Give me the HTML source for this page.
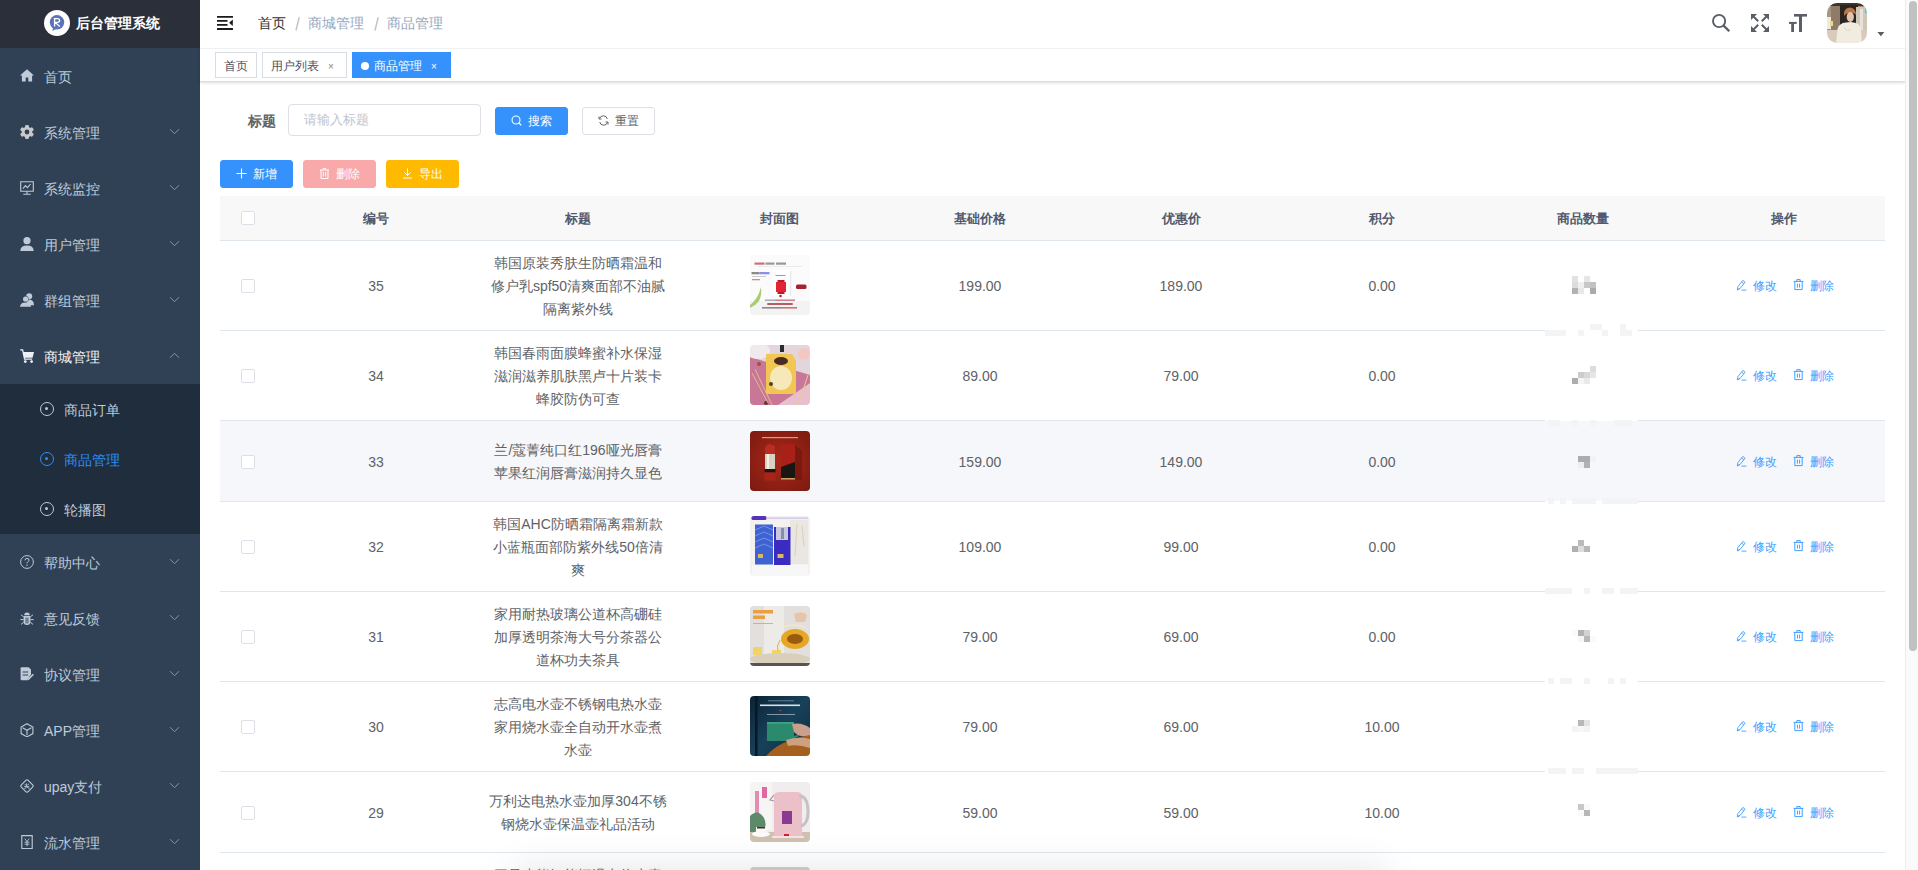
<!DOCTYPE html>
<html><head><meta charset="utf-8">
<style>
*{box-sizing:border-box;margin:0;padding:0}
html,body{width:1918px;height:870px;overflow:hidden;background:#fff;font-family:"Liberation Sans",sans-serif;}
.abs{position:absolute}
#side{position:absolute;left:0;top:0;width:200px;height:870px;background:#304156}
#logo{position:absolute;left:0;top:0;width:200px;height:48px;background:#2b2f3a}
#logo .c{position:absolute;left:44px;top:10px;width:26px;height:26px;border-radius:50%;background:#fff}
#logo .c i{position:absolute;left:6px;top:6px;width:14px;height:14px;border-radius:50%;background:#5a72b8}
#logo .t{position:absolute;left:76px;top:15px;font-size:14px;line-height:17px;font-weight:bold;color:#fff;white-space:nowrap}
.mi{position:absolute;left:0;width:200px;height:56px;color:#bfcbd9;font-size:14px}
.mi .tx{position:absolute;left:44px;top:20px;line-height:18px;white-space:nowrap}
.mi svg.ic{position:absolute;left:20px;top:21px}
.mi svg.ar{position:absolute;left:169px;top:24px}
#sub{position:absolute;left:0;top:384px;width:200px;height:150px;background:#1f2d3d}
.si{position:absolute;left:0;width:200px;height:50px;color:#bfcbd9;font-size:14px}
.si .tx{position:absolute;left:64px;top:17px;line-height:18px;white-space:nowrap}
.si .cir{position:absolute;left:40px;top:18px;width:14px;height:14px;border:1.3px solid #bfcbd9;border-radius:50%}
.si .cir:after{content:"";position:absolute;left:4.2px;top:4.2px;width:3px;height:3px;border-radius:50%;background:#bfcbd9}
.si.act{color:#2f8ef5}
.si.act .cir{border-color:#2f8ef5}
.si.act .cir:after{background:#2f8ef5}

#nav{position:absolute;left:200px;top:0;width:1705px;height:48px;background:#fff;z-index:2}
.bc{position:absolute;top:15px;font-size:14px;line-height:17px;white-space:nowrap}
#tags{position:absolute;left:200px;top:48px;width:1705px;height:34px;background:#fff;border-top:1px solid #eef0f1;border-bottom:1px solid #d8dce5;box-shadow:0 1px 3px 0 rgba(0,0,0,.12),0 0 3px 0 rgba(0,0,0,.04)}
.tag{position:absolute;top:3px;height:26px;border:1px solid #d8dce5;color:#495060;background:#fff;font-size:12px;line-height:24px;padding:1px 8px 0;white-space:nowrap}
.tag .x{display:inline-block;width:16px;text-align:center;font-size:10px;color:#888;margin-left:3px;position:relative;left:1px;top:0px}
.tag.act{background:#3592fd;border-color:#3592fd;color:#fff}
.tag.act .x{color:#fff}
.tag.act .dot{display:inline-block;width:8px;height:8px;border-radius:50%;background:#fff;margin-right:5px;vertical-align:0px}

#main{position:absolute;left:200px;top:82px;width:1705px;height:788px;background:#fff}
.btn{position:absolute;height:28px;font-size:12px;line-height:26px;border-radius:3px;border:1px solid;text-align:center;white-space:nowrap}

#scroll{position:absolute;left:1905px;top:0;width:13px;height:870px;background:#fafafa;border-left:1px solid #ececec}
#thumb{position:absolute;left:1909px;top:1px;width:8px;height:650px;border-radius:4px;background:#c1c1c1}

table{position:absolute;left:220px;top:196px;width:1665px;border-collapse:collapse;table-layout:fixed}
th{height:45px;background:#f8f8f9;color:#515a6e;font-size:13px;font-weight:bold;text-align:center;border-bottom:1px solid #dfe6ec}
td{color:#606266;font-size:14px;text-align:center;border-bottom:1px solid #dfe6ec;line-height:23px;padding:10px 0}
tr.hov td{background:#f5f7fa}
.cb{display:inline-block;width:14px;height:14px;border:1px solid #dcdfe6;border-radius:2px;background:#fff;vertical-align:middle}
.img{display:block;margin:0 auto;width:60px;height:60px;border-radius:4px;overflow:hidden;position:relative}
.tt{width:180px;margin:0 auto}
.op{font-size:12px;color:#409eff;white-space:nowrap}

.lbl{position:absolute;left:248px;top:112.5px;font-size:14px;line-height:16px;font-weight:bold;color:#606266;white-space:nowrap}
.inp{position:absolute;left:288px;top:104px;width:193px;height:32px;border:1px solid #dcdfe6;border-radius:4px;background:#fff}
.inp span{position:absolute;left:15px;top:7px;font-size:13px;line-height:16px;color:#c0c4cc;white-space:nowrap}
.btn{position:absolute;height:28px;font-size:12px;line-height:26px;border-radius:3px;border:1px solid;text-align:center;white-space:nowrap}
.btn svg{vertical-align:-1px;margin-right:6px}
#thead{position:absolute;left:220px;top:196px;width:1665px;height:45px;background:#f8f8f9;border-bottom:1px solid #dfe6ec}
#thead .h{position:absolute;top:15px;width:200px;text-align:center;font-size:13px;line-height:16px;font-weight:bold;color:#515a6e;white-space:nowrap}
.row{position:absolute;left:220px;width:1665px;border-bottom:1px solid #dfe6ec;background:#fff}
.row.hov{background:#f5f7fa}
.row .c{position:absolute;width:200px;display:flex;align-items:center;justify-content:center;text-align:center;font-size:14px;line-height:23px;color:#606266;white-space:nowrap}
.cb{position:absolute;display:block;width:14px;height:14px;border:1px solid #dcdfe6;border-radius:2px;background:#fff}
.im{position:absolute;width:60px;height:60px;border-radius:4px;overflow:hidden}
.im svg{filter:blur(0.5px)}
.px{position:absolute;display:block;width:6px;height:6px}
.lb{position:absolute;display:block;height:12px;background:#f3f4f6}
.op{position:absolute;font-size:12px;line-height:18px;color:#409eff;white-space:nowrap}
.op svg{vertical-align:-1px}
</style></head><body>

<div id="side">
  <div id="logo"><svg class="abs" style="left:43px;top:9px" width="28" height="28" viewBox="0 0 28 28"><circle cx="14" cy="14" r="13" fill="#fff"/><circle cx="14" cy="13.3" r="7.2" fill="#5b73b9"/><path d="M10 19L9.5 22L13 20Z" fill="#5b73b9"/><path d="M11.6 17.6V9.6H14.6Q16.6 9.6 16.6 11.6Q16.6 13.4 14.6 13.4H12.2L16.8 17.6" fill="none" stroke="#fff" stroke-width="1.3"/><path d="M10.8 9.6H13" stroke="#fff" stroke-width="1"/></svg><div class="t">后台管理系统</div></div>
  <div class="mi" style="top:48px"><svg class="ic" width="14" height="14" viewBox="0 0 14 14"><path d="M7 0.2L14 6.4H12.1V12.4H8.3V8.5H5.7V12.4H1.9V6.4H0Z" fill="#bfcbd9"/></svg><span class="tx">首页</span></div>
  <div class="mi" style="top:104px"><svg class="ic" width="14" height="14" viewBox="0 0 14 14"><circle cx="7" cy="7" r="5.3" fill="#c8c9cb"/><rect x="5.1" y="0" width="3.8" height="14" rx="1.2" fill="#c8c9cb" transform="rotate(0 7 7)"/><rect x="5.1" y="0" width="3.8" height="14" rx="1.2" fill="#c8c9cb" transform="rotate(60 7 7)"/><rect x="5.1" y="0" width="3.8" height="14" rx="1.2" fill="#c8c9cb" transform="rotate(120 7 7)"/><circle cx="7" cy="7" r="2.4" fill="#304156"/></svg><span class="tx">系统管理</span><svg class="ar" width="11" height="7" viewBox="0 0 11 7"><path d="M1 1.2L5.5 5.7L10 1.2" fill="none" stroke="#8b95a5" stroke-width="1"/></svg></div>
  <div class="mi" style="top:160px"><svg class="ic" width="14" height="14" viewBox="0 0 14 14"><path d="M0.7 0.7H13.3V10.2H0.7Z M7 10.2V13.2 M3.3 13.3H10.7" fill="none" stroke="#bfcbd9" stroke-width="1.1"/><path d="M3 7.6L5.4 4.6L7.4 6.6L10.6 3" fill="none" stroke="#bfcbd9" stroke-width="1.1"/></svg><span class="tx">系统监控</span><svg class="ar" width="11" height="7" viewBox="0 0 11 7"><path d="M1 1.2L5.5 5.7L10 1.2" fill="none" stroke="#8b95a5" stroke-width="1"/></svg></div>
  <div class="mi" style="top:216px"><svg class="ic" width="14" height="14" viewBox="0 0 14 14"><circle cx="7" cy="3.7" r="3.6" fill="#bfcbd9"/><path d="M0.3 14.3Q0.3 8.6 7 8.6Q13.7 8.6 13.7 14.3Z" fill="#bfcbd9"/></svg><span class="tx">用户管理</span><svg class="ar" width="11" height="7" viewBox="0 0 11 7"><path d="M1 1.2L5.5 5.7L10 1.2" fill="none" stroke="#8b95a5" stroke-width="1"/></svg></div>
  <div class="mi" style="top:272px"><svg class="ic" width="14" height="14" viewBox="0 0 14 14"><circle cx="9.2" cy="3.3" r="3" fill="#bfcbd9"/><path d="M6 8Q7 6.6 9.2 6.6Q13.8 6.8 14 12.3H8Z" fill="#bfcbd9"/><circle cx="5.6" cy="6" r="3" fill="#304156"/><circle cx="5.6" cy="6" r="2.6" fill="#bfcbd9"/><path d="M0 13.7Q0.2 9.4 5.6 9.4Q10.8 9.4 11 13.7Z" fill="#bfcbd9"/></svg><span class="tx">群组管理</span><svg class="ar" width="11" height="7" viewBox="0 0 11 7"><path d="M1 1.2L5.5 5.7L10 1.2" fill="none" stroke="#8b95a5" stroke-width="1"/></svg></div>
  <div class="mi" style="top:328px"><svg class="ic" width="14" height="14" viewBox="0 0 14 14"><path d="M0.2 0.9H2.6L4.6 10.2H12.2" fill="none" stroke="#edf1f5" stroke-width="1.3"/><path d="M3 2.9H14L12.6 8.8H4.2Z" fill="#edf1f5"/><circle cx="5.3" cy="12.6" r="1.4" fill="#edf1f5"/><circle cx="11.6" cy="12.6" r="1.4" fill="#edf1f5"/></svg><span class="tx" style="color:#f4f4f5">商城管理</span><svg class="ar" width="11" height="7" viewBox="0 0 11 7"><path d="M1 5.8L5.5 1.3L10 5.8" fill="none" stroke="#8b95a5" stroke-width="1"/></svg></div>
  <div id="sub">
    <div class="si" style="top:0"><i class="cir"></i><span class="tx">商品订单</span></div>
    <div class="si act" style="top:50px"><i class="cir"></i><span class="tx">商品管理</span></div>
    <div class="si" style="top:100px"><i class="cir"></i><span class="tx">轮播图</span></div>
  </div>
  <div class="mi" style="top:534px"><svg class="ic" width="14" height="14" viewBox="0 0 14 14"><circle cx="7" cy="7" r="6.4" fill="none" stroke="#bfcbd9" stroke-width="1"/><path d="M5 5.4Q5 3.4 7 3.4Q9 3.4 9 5.2Q9 6.4 7.6 7Q7 7.3 7 8.4" fill="none" stroke="#bfcbd9" stroke-width="1"/><circle cx="7" cy="10.3" r="0.7" fill="#bfcbd9"/></svg><span class="tx">帮助中心</span><svg class="ar" width="11" height="7" viewBox="0 0 11 7"><path d="M1 1.2L5.5 5.7L10 1.2" fill="none" stroke="#8b95a5" stroke-width="1"/></svg></div>
  <div class="mi" style="top:590px"><svg class="ic" width="14" height="14" viewBox="0 0 14 14"><path d="M4.2 4.2Q4.2 1.5 7 1.5Q9.8 1.5 9.8 4.2Z" fill="#bfcbd9"/><path d="M3.6 5H10.4V10.5Q10.4 14 7 14Q3.6 14 3.6 10.5Z" fill="#bfcbd9"/><path d="M6.1 6.5V12.5M7.9 6.5V12.5" stroke="#304156" stroke-width="0.9"/><path d="M1 3.8L3.6 5.8M13 3.8L10.4 5.8M0.3 8.6H3.6M13.7 8.6H10.4M1 13.4L3.8 11.2M13 13.4L10.2 11.2" stroke="#bfcbd9" stroke-width="1"/></svg><span class="tx">意见反馈</span><svg class="ar" width="11" height="7" viewBox="0 0 11 7"><path d="M1 1.2L5.5 5.7L10 1.2" fill="none" stroke="#8b95a5" stroke-width="1"/></svg></div>
  <div class="mi" style="top:646px"><svg class="ic" width="14" height="14" viewBox="0 0 14 14"><path d="M0.6 1.2Q0.6 0.2 1.6 0.2H8.6L11 2.6V7.5L7 13.2H1.6Q0.6 13.2 0.6 12.2Z" fill="#bfcbd9"/><path d="M2.6 5H8.2M2.6 8H8.2" stroke="#304156" stroke-width="1.1"/><path d="M8 12.6L13.4 7.2" stroke="#bfcbd9" stroke-width="1.6"/><path d="M7.2 13.6L7.8 11.8L8.8 12.8Z" fill="#bfcbd9"/></svg><span class="tx">协议管理</span><svg class="ar" width="11" height="7" viewBox="0 0 11 7"><path d="M1 1.2L5.5 5.7L10 1.2" fill="none" stroke="#8b95a5" stroke-width="1"/></svg></div>
  <div class="mi" style="top:702px"><svg class="ic" width="14" height="14" viewBox="0 0 14 14"><path d="M7 0.7L12.9 4V10.6L7 13.9L1.1 10.6V4Z" fill="none" stroke="#bfcbd9" stroke-width="1.1"/><path d="M2.6 4.8L7 7.3L11.4 4.8M7 7.3V12.3" fill="none" stroke="#bfcbd9" stroke-width="1.1"/></svg><span class="tx">APP管理</span><svg class="ar" width="11" height="7" viewBox="0 0 11 7"><path d="M1 1.2L5.5 5.7L10 1.2" fill="none" stroke="#8b95a5" stroke-width="1"/></svg></div>
  <div class="mi" style="top:758px"><svg class="ic" width="14" height="14" viewBox="0 0 14 14"><path d="M7 0.8Q7.6 0.8 8.2 1.4L12.6 5.8Q13.2 6.4 13.2 7Q13.2 7.6 12.6 8.2L8.2 12.6Q7.6 13.2 7 13.2Q6.4 13.2 5.8 12.6L1.4 8.2Q0.8 7.6 0.8 7Q0.8 6.4 1.4 5.8L5.8 1.4Q6.4 0.8 7 0.8Z" fill="none" stroke="#bfcbd9" stroke-width="1.1"/><path d="M4.2 7.4H9.4M6.6 4.4V7.4Q6.4 9.2 4.4 9.6M6.8 7.6Q7.6 9.2 9.6 9.4M5 5.2L5.8 6.4M8.6 4.8L7.8 6.2" fill="none" stroke="#bfcbd9" stroke-width="0.9"/></svg><span class="tx">upay支付</span><svg class="ar" width="11" height="7" viewBox="0 0 11 7"><path d="M1 1.2L5.5 5.7L10 1.2" fill="none" stroke="#8b95a5" stroke-width="1"/></svg></div>
  <div class="mi" style="top:814px"><svg class="ic" width="14" height="14" viewBox="0 0 14 14"><path d="M1.8 0.6H12.2V13.6H1.8Z" fill="none" stroke="#bfcbd9" stroke-width="1.1"/><path d="M4.8 3.6L7 6.6L9.2 3.6M7 6.6V11.2M4.6 7.2H9.4M4.6 9.2H9.4" fill="none" stroke="#bfcbd9" stroke-width="0.9"/></svg><span class="tx">流水管理</span><svg class="ar" width="11" height="7" viewBox="0 0 11 7"><path d="M1 1.2L5.5 5.7L10 1.2" fill="none" stroke="#8b95a5" stroke-width="1"/></svg></div>
</div>

<div id="nav">
  <svg class="abs" style="left:17px;top:16px" width="16" height="14" viewBox="0 0 16 14"><path d="M0.4 0.9H15.6M0.4 4.9H9.8M0.4 8.9H9.8M0.4 13H15.6" stroke="#1a1a1a" stroke-width="1.8" stroke-linecap="round"/><path d="M15.8 3.6V10.1L12.1 6.85Z" fill="#1a1a1a"/></svg>
  <span class="bc" style="left:58px;color:#303133">首页</span>
  <svg class="abs" style="left:94px;top:16px" width="7" height="16" viewBox="0 0 7 16"><path d="M5.2 1.2L2 14.5" stroke="#c0c4cc" stroke-width="1.5"/></svg>
  <span class="bc" style="left:108px;color:#97a8be">商城管理</span>
  <svg class="abs" style="left:173px;top:16px" width="7" height="16" viewBox="0 0 7 16"><path d="M5.2 1.2L2 14.5" stroke="#c0c4cc" stroke-width="1.5"/></svg>
  <span class="bc" style="left:187px;color:#97a8be">商品管理</span>

  <svg class="abs" style="left:1500px;top:0" width="205" height="48" viewBox="1700 0 205 48">
    <circle cx="1719.1" cy="21" r="6.1" fill="none" stroke="#5a5e66" stroke-width="1.9"/>
    <path d="M1723.6 25.6L1729.3 31.3" stroke="#5a5e66" stroke-width="2.3"/>
    <g fill="#5a5e66">
      <path d="M1751 14H1757L1751 20Z"/><path d="M1753.5 16.5L1758.2 21.2" stroke="#5a5e66" stroke-width="2"/>
      <path d="M1769 14H1763L1769 20Z"/><path d="M1766.5 16.5L1761.8 21.2" stroke="#5a5e66" stroke-width="2"/>
      <path d="M1751 32H1757L1751 26Z"/><path d="M1753.5 29.5L1758.2 24.8" stroke="#5a5e66" stroke-width="2"/>
      <path d="M1769 32H1763L1769 26Z"/><path d="M1766.5 29.5L1761.8 24.8" stroke="#5a5e66" stroke-width="2"/>
      <rect x="1794" y="14" width="13" height="2.6"/><rect x="1799" y="14" width="3" height="18"/>
      <rect x="1789" y="21.9" width="7.7" height="2"/><rect x="1791.2" y="22" width="2.8" height="10"/>
    </g>
    <path d="M1877.4 32H1884.4L1880.9 36.2Z" fill="#5a5e66"/>
  </svg>
  <div class="abs" style="left:1627px;top:3px;width:40px;height:40px;border-radius:10px;overflow:hidden">
    <svg width="40" height="40" viewBox="0 0 40 40" style="filter:blur(0.7px)">
      <rect x="-2" y="-2" width="44" height="44" fill="#a89682"/>
      <rect x="-2" y="-2" width="44" height="5" fill="#3e342c"/>
      <rect x="4" y="3" width="10" height="25" fill="#8e7c68"/>
      <rect x="-2" y="14" width="6" height="12" fill="#f0ead8"/>
      <rect x="3" y="18" width="3" height="5" fill="#e8d890"/>
      <rect x="13" y="2" width="18" height="23" fill="#2c2420"/>
      <rect x="29" y="4" width="13" height="30" fill="#cfc6b8"/>
      <rect x="33" y="6" width="3" height="26" fill="#e8e2d8"/>
      <rect x="-2" y="27" width="44" height="15" fill="#d9cbbb"/>
      <path d="M17 13Q16 5 23 4.5Q29 5 29 12Q27 9 23 10Q19 10 17 13Z" fill="#b8784a"/>
      <ellipse cx="23.3" cy="14" rx="3.6" ry="5" fill="#e2c4ae"/>
      <path d="M9 42L10.5 26Q12 20 19 19.5L24 19L29 20Q34 22 34 28L35 42Z" fill="#f1ece0"/>
      <path d="M17 24Q20 30 24 26" stroke="#e0d8c8" stroke-width="1" fill="none"/>
      <rect x="38" y="5" width="3" height="5" fill="#40d0d0"/>
    </svg>
  </div>
</div>

<div id="tags">
  <div class="tag" style="left:15px">首页</div>
  <div class="tag" style="left:62px;width:85px">用户列表<span class="x">×</span></div>
  <div class="tag act" style="left:152px;width:99px"><span class="dot"></span>商品管理<span class="x">×</span></div>
</div>


<div class="lbl">标题</div>
<div class="inp"><span>请输入标题</span></div>
<div class="btn" style="left:495px;top:107px;width:73px;background:#3592fd;border-color:#3592fd;color:#fff"><svg width="11" height="11" viewBox="0 0 11 11"><circle cx="5" cy="5" r="4" fill="none" stroke="#fff" stroke-width="1.1"/><path d="M8 8L10.3 10.3" stroke="#fff" stroke-width="1.1"/></svg>搜索</div>
<div class="btn" style="left:582px;top:107px;width:73px;background:#fff;border-color:#dcdfe6;color:#606266"><svg width="11" height="11" viewBox="0 0 11 11"><path d="M9.3 4A4 4 0 0 0 1.6 3.5 M1.7 7A4 4 0 0 0 9.4 7.5" fill="none" stroke="#606266" stroke-width="1"/><path d="M1 1.5V4H3.5 M10 9.5V7H7.5" fill="none" stroke="#606266" stroke-width="1"/></svg>重置</div>
<div class="btn" style="left:220px;top:160px;width:73px;background:#3592fd;border-color:#3592fd;color:#fff"><svg width="11" height="11" viewBox="0 0 11 11"><path d="M5.5 0.5V10.5M0.5 5.5H10.5" stroke="#fff" stroke-width="1.1"/></svg>新增</div>
<div class="btn" style="left:303px;top:160px;width:73px;background:#f9a9a9;border-color:#f9a9a9;color:#fff"><svg width="11" height="11" viewBox="0 0 11 11"><path d="M1 2H10 M4 2V0.7H7V2 M2 2V10.5H9V2 M4.3 4V8.5 M6.7 4V8.5" fill="none" stroke="#fff" stroke-width="1"/></svg>删除</div>
<div class="btn" style="left:386px;top:160px;width:73px;background:#ffba00;border-color:#ffba00;color:#fff"><svg width="11" height="11" viewBox="0 0 11 11"><path d="M5.5 0.5V7.5 M2.5 4.5L5.5 7.5L8.5 4.5 M1 10H10" fill="none" stroke="#fff" stroke-width="1"/></svg>导出</div>
<div id="thead">
  <i class="cb" style="left:21px;top:15px"></i>
  <div class="h" style="left:56px">编号</div>
  <div class="h" style="left:258px">标题</div>
  <div class="h" style="left:459px">封面图</div>
  <div class="h" style="left:660px">基础价格</div>
  <div class="h" style="left:861px">优惠价</div>
  <div class="h" style="left:1062px">积分</div>
  <div class="h" style="left:1263px">商品数量</div>
  <div class="h" style="left:1464px">操作</div>
</div>

<svg width="0" height="0" style="position:absolute">
 <defs>
  <linearGradient id="g6" x1="0" y1="0" x2="1" y2="1"><stop offset="0" stop-color="#0c2234"/><stop offset="0.5" stop-color="#17415a"/><stop offset="1" stop-color="#0e2a3c"/></linearGradient>
  <radialGradient id="g3" cx="0.5" cy="0.5" r="0.7"><stop offset="0" stop-color="#a8281a"/><stop offset="1" stop-color="#7c1a10"/></radialGradient>
 </defs>
</svg>
<!--ROWS-->
<div class="row" style="top:241px;height:90px">
<i class="cb" style="left:21px;top:38px"></i>
<div class="c" style="left:56px;top:0;height:89px;padding-top:2px">35</div>
<div class="c" style="left:258px;top:0;height:89px;padding-top:2px"><div class="tt">韩国原装秀肤生防晒霜温和<br>修户乳spf50清爽面部不油腻<br>隔离紫外线</div></div>
<div class="img1 im" style="left:530px;top:14px"><svg width="60" height="60" viewBox="0 0 60 60"><rect width="60" height="60" fill="#fbfbfb"/>
<rect x="0" y="46" width="60" height="14" fill="#f3f3f3"/>
<g opacity="0.75">
<rect x="4.5" y="7.5" width="10" height="2.2" fill="#c04050"/><rect x="15.5" y="7.5" width="9" height="2.2" fill="#777"/><rect x="26" y="7.5" width="10" height="2.2" fill="#777"/>
<rect x="8" y="11" width="44" height="0.7" fill="#ddd"/>
<rect x="1.5" y="17" width="8" height="2.3" fill="#666"/><rect x="9.5" y="17" width="10" height="2.3" fill="#6a6ae8"/>
<rect x="2" y="21" width="14" height="1" fill="#bbb"/><rect x="2" y="24" width="8" height="1.3" fill="#d06070"/>
<rect x="15" y="44.5" width="10" height="1.4" fill="#888"/><rect x="25" y="44.5" width="20" height="1.4" fill="#c04858"/>
<rect x="17" y="48" width="26" height="2" rx="1" fill="#a82838"/>
<rect x="12" y="52" width="20" height="1.6" fill="#666"/><rect x="32" y="52" width="15" height="1.6" fill="#c04858"/>
</g>
<rect x="23" y="15" width="18" height="26" fill="#fff"/><rect x="40" y="16" width="1.2" height="25" fill="#e8e8e8"/>
<rect x="25.5" y="20" width="10" height="1" fill="#d88090"/>
<path d="M26 27H36V37H26Z" fill="#e02535"/><rect x="27.5" y="25" width="7" height="2" fill="#c01a2a"/><rect x="27.5" y="37" width="7" height="2" fill="#c01a2a"/>
<circle cx="30.5" cy="41" r="1.3" fill="#c02030"/>
<rect x="46" y="29.5" width="10.5" height="4.5" rx="1.5" fill="#a82030"/>
<path d="M0 50Q8 44 11 32Q12 40 9 46Q6 50 0 53Z" fill="#a8cc70"/>
</svg></div>
<div class="c" style="left:660px;top:0;height:89px;padding-top:2px">199.00</div>
<div class="c" style="left:861px;top:0;height:89px;padding-top:2px">189.00</div>
<div class="c" style="left:1062px;top:0;height:89px;padding-top:2px">0.00</div>
<svg class="abs" style="left:1516px;top:38px" width="11" height="12" viewBox="0 0 11 12"><path d="M1.3 10.8L1.9 7.6L6.9 1.4L9.1 3.2L4.1 9.4Z M1.3 10.8L4.1 9.4 M5.6 3L7.8 4.8 M5.5 11.1H10.4" fill="none" stroke="#409eff" stroke-width="0.9"/></svg>
<span class="op" style="left:1533px;top:36px">修改</span>
<svg class="abs" style="left:1573px;top:38px" width="11" height="13" viewBox="0 0 11 13"><path d="M0.6 2.4H10.4 M3.8 2.4V0.6H7.2V2.4 M1.8 2.4V10.6H9.2V2.4 M4.4 4.6V8.6 M6.6 4.6V8.6" fill="none" stroke="#409eff" stroke-width="1"/></svg>
<span class="op" style="left:1590px;top:36px">删除</span>
</div>
<div class="row" style="top:331px;height:90px">
<i class="cb" style="left:21px;top:38px"></i>
<div class="c" style="left:56px;top:0;height:89px;padding-top:2px">34</div>
<div class="c" style="left:258px;top:0;height:89px;padding-top:2px"><div class="tt">韩国春雨面膜蜂蜜补水保湿<br>滋润滋养肌肤黑卢十片装卡<br>蜂胶防伪可查</div></div>
<div class="img2 im" style="left:530px;top:14px"><svg width="60" height="60" viewBox="0 0 60 60"><rect width="60" height="60" fill="#e2d6dc"/>
<path d="M0 12L60 30V60H0Z" fill="#c87896"/>
<path d="M28 60L60 38V60Z" fill="#e8c0cc"/>
<ellipse cx="8" cy="6" rx="12" ry="8" fill="#f0eaec"/>
<circle cx="54" cy="9" r="6" fill="#f4c8c0"/>
<rect x="30" y="0" width="4" height="7" fill="#2a2a30"/>
<path d="M16 9H42L46 16V49H16Z" fill="#f2c652"/>
<ellipse cx="31" cy="33" rx="11" ry="12" fill="#f6e8b8"/>
<ellipse cx="31" cy="16" rx="7" ry="4" fill="#4a2a22"/>
<circle cx="21" cy="39" r="2" fill="#4a4038"/>
<circle cx="16" cy="58" r="2" fill="#5a3a30"/><circle cx="9" cy="19" r="2" fill="#a05040"/>
<path d="M2 28L18 58M5 24L22 60" stroke="#e8c890" stroke-width="0.8"/>
<path d="M58 30L48 60" stroke="#e8c890" stroke-width="1"/></svg></div>
<div class="c" style="left:660px;top:0;height:89px;padding-top:2px">89.00</div>
<div class="c" style="left:861px;top:0;height:89px;padding-top:2px">79.00</div>
<div class="c" style="left:1062px;top:0;height:89px;padding-top:2px">0.00</div>
<svg class="abs" style="left:1516px;top:38px" width="11" height="12" viewBox="0 0 11 12"><path d="M1.3 10.8L1.9 7.6L6.9 1.4L9.1 3.2L4.1 9.4Z M1.3 10.8L4.1 9.4 M5.6 3L7.8 4.8 M5.5 11.1H10.4" fill="none" stroke="#409eff" stroke-width="0.9"/></svg>
<span class="op" style="left:1533px;top:36px">修改</span>
<svg class="abs" style="left:1573px;top:38px" width="11" height="13" viewBox="0 0 11 13"><path d="M0.6 2.4H10.4 M3.8 2.4V0.6H7.2V2.4 M1.8 2.4V10.6H9.2V2.4 M4.4 4.6V8.6 M6.6 4.6V8.6" fill="none" stroke="#409eff" stroke-width="1"/></svg>
<span class="op" style="left:1590px;top:36px">删除</span>
</div>
<div class="row hov" style="top:421px;height:81px">
<i class="cb" style="left:21px;top:34px"></i>
<div class="c" style="left:56px;top:0;height:80px;padding-top:2px">33</div>
<div class="c" style="left:258px;top:0;height:80px;padding-top:2px"><div class="tt">兰/蔻菁纯口红196哑光唇膏<br>苹果红润唇膏滋润持久显色</div></div>
<div class="img3 im" style="left:530px;top:10px"><svg width="60" height="60" viewBox="0 0 60 60"><rect width="60" height="60" fill="url(#g3)"/>
<rect x="12" y="6" width="36" height="1.2" fill="#d89a8a"/>
<path d="M15 17Q16 13 20 13L25 15V24H15Z" fill="#b82c22"/>
<rect x="15" y="23" width="10" height="15" fill="#d8d0c0"/><rect x="17" y="23" width="2" height="15" fill="#f4f0e8"/>
<rect x="14.5" y="38" width="11" height="3.5" fill="#1e1410"/>
<rect x="14.5" y="41.5" width="11" height="8" fill="#a82418"/>
<rect x="31" y="13" width="14" height="36" rx="1" fill="#a82018"/>
<path d="M31 36L45 31V47H31Z" fill="#1a1614"/>
<rect x="31" y="47" width="14" height="1.5" fill="#c8a060"/>
<path d="M45 14L52 20V49L45 49Z" fill="#6a140c" opacity="0.6"/></svg></div>
<div class="c" style="left:660px;top:0;height:80px;padding-top:2px">159.00</div>
<div class="c" style="left:861px;top:0;height:80px;padding-top:2px">149.00</div>
<div class="c" style="left:1062px;top:0;height:80px;padding-top:2px">0.00</div>
<svg class="abs" style="left:1516px;top:34px" width="11" height="12" viewBox="0 0 11 12"><path d="M1.3 10.8L1.9 7.6L6.9 1.4L9.1 3.2L4.1 9.4Z M1.3 10.8L4.1 9.4 M5.6 3L7.8 4.8 M5.5 11.1H10.4" fill="none" stroke="#409eff" stroke-width="0.9"/></svg>
<span class="op" style="left:1533px;top:32px">修改</span>
<svg class="abs" style="left:1573px;top:34px" width="11" height="13" viewBox="0 0 11 13"><path d="M0.6 2.4H10.4 M3.8 2.4V0.6H7.2V2.4 M1.8 2.4V10.6H9.2V2.4 M4.4 4.6V8.6 M6.6 4.6V8.6" fill="none" stroke="#409eff" stroke-width="1"/></svg>
<span class="op" style="left:1590px;top:32px">删除</span>
</div>
<div class="row" style="top:502px;height:90px">
<i class="cb" style="left:21px;top:38px"></i>
<div class="c" style="left:56px;top:0;height:89px;padding-top:2px">32</div>
<div class="c" style="left:258px;top:0;height:89px;padding-top:2px"><div class="tt">韩国AHC防晒霜隔离霜新款<br>小蓝瓶面部防紫外线50倍清<br>爽</div></div>
<div class="img4 im" style="left:530px;top:14px"><svg width="60" height="60" viewBox="0 0 60 60"><rect width="60" height="60" fill="#f4f2f0"/>
<rect x="40" y="4" width="18" height="44" fill="#eae6e2"/>
<path d="M47 8L45 40M52 10L54 30" stroke="#d8c8b0" stroke-width="0.8"/>
<rect x="1.5" y="0" width="15" height="4" rx="1.5" fill="#5534b8"/>
<rect x="16" y="1.5" width="42" height="1.2" fill="#c8c0e8"/>
<rect x="5" y="8.5" width="18" height="40" fill="#3f62d2"/>
<path d="M5 14L14 10L23 14M5 20L14 16L23 20M5 26L14 22L23 26M5 32L14 28L23 32" stroke="#8aa8f0" stroke-width="0.7" fill="none"/>
<rect x="8" y="38" width="5" height="4" fill="#d8b860"/>
<rect x="24" y="11" width="16.5" height="43.5" fill="#3a2cc0"/>
<rect x="26" y="11" width="12" height="13" fill="#c8c8dc"/><rect x="31" y="12" width="3" height="11" fill="#8a8ab0"/>
<rect x="27.5" y="38" width="6" height="4" fill="#d8b860"/>
<rect x="2" y="49" width="56" height="11" fill="#f7f7f7"/></svg></div>
<div class="c" style="left:660px;top:0;height:89px;padding-top:2px">109.00</div>
<div class="c" style="left:861px;top:0;height:89px;padding-top:2px">99.00</div>
<div class="c" style="left:1062px;top:0;height:89px;padding-top:2px">0.00</div>
<svg class="abs" style="left:1516px;top:38px" width="11" height="12" viewBox="0 0 11 12"><path d="M1.3 10.8L1.9 7.6L6.9 1.4L9.1 3.2L4.1 9.4Z M1.3 10.8L4.1 9.4 M5.6 3L7.8 4.8 M5.5 11.1H10.4" fill="none" stroke="#409eff" stroke-width="0.9"/></svg>
<span class="op" style="left:1533px;top:36px">修改</span>
<svg class="abs" style="left:1573px;top:38px" width="11" height="13" viewBox="0 0 11 13"><path d="M0.6 2.4H10.4 M3.8 2.4V0.6H7.2V2.4 M1.8 2.4V10.6H9.2V2.4 M4.4 4.6V8.6 M6.6 4.6V8.6" fill="none" stroke="#409eff" stroke-width="1"/></svg>
<span class="op" style="left:1590px;top:36px">删除</span>
</div>
<div class="row" style="top:592px;height:90px">
<i class="cb" style="left:21px;top:38px"></i>
<div class="c" style="left:56px;top:0;height:89px;padding-top:2px">31</div>
<div class="c" style="left:258px;top:0;height:89px;padding-top:2px"><div class="tt">家用耐热玻璃公道杯高硼硅<br>加厚透明茶海大号分茶器公<br>道杯功夫茶具</div></div>
<div class="img5 im" style="left:530px;top:14px"><svg width="60" height="60" viewBox="0 0 60 60"><rect width="60" height="60" fill="#e2dfdc"/>
<rect x="14" y="0" width="20" height="50" fill="#ecebe8"/>
<rect x="3" y="4" width="20" height="3.5" fill="#e8a040"/>
<rect x="3" y="9.5" width="12" height="3.5" fill="#e8a040"/>
<rect x="3" y="17" width="20" height="0.8" fill="#aaa"/>
<path d="M44 8Q52 4 57 9L55 16L46 16Z" fill="#e8c4a8"/>
<ellipse cx="45" cy="33" rx="14" ry="10" fill="#e6a824"/>
<ellipse cx="45" cy="33" rx="8" ry="5" fill="#9a5a10"/>
<path d="M31 22Q44 16 56 22" stroke="#f4e8c8" stroke-width="1.5" fill="none"/>
<path d="M30 34Q26 40 28 46" stroke="#e0b040" stroke-width="1" fill="none"/>
<rect x="3" y="41" width="9" height="8" fill="#f0d25a" opacity="0.9"/>
<rect x="22" y="44" width="9" height="7" fill="#f0d25a" opacity="0.9"/>
<ellipse cx="30" cy="53" rx="30" ry="6" fill="#d8d0bc"/>
<rect x="0" y="57" width="60" height="3" fill="#585450"/></svg></div>
<div class="c" style="left:660px;top:0;height:89px;padding-top:2px">79.00</div>
<div class="c" style="left:861px;top:0;height:89px;padding-top:2px">69.00</div>
<div class="c" style="left:1062px;top:0;height:89px;padding-top:2px">0.00</div>
<svg class="abs" style="left:1516px;top:38px" width="11" height="12" viewBox="0 0 11 12"><path d="M1.3 10.8L1.9 7.6L6.9 1.4L9.1 3.2L4.1 9.4Z M1.3 10.8L4.1 9.4 M5.6 3L7.8 4.8 M5.5 11.1H10.4" fill="none" stroke="#409eff" stroke-width="0.9"/></svg>
<span class="op" style="left:1533px;top:36px">修改</span>
<svg class="abs" style="left:1573px;top:38px" width="11" height="13" viewBox="0 0 11 13"><path d="M0.6 2.4H10.4 M3.8 2.4V0.6H7.2V2.4 M1.8 2.4V10.6H9.2V2.4 M4.4 4.6V8.6 M6.6 4.6V8.6" fill="none" stroke="#409eff" stroke-width="1"/></svg>
<span class="op" style="left:1590px;top:36px">删除</span>
</div>
<div class="row" style="top:682px;height:90px">
<i class="cb" style="left:21px;top:38px"></i>
<div class="c" style="left:56px;top:0;height:89px;padding-top:2px">30</div>
<div class="c" style="left:258px;top:0;height:89px;padding-top:2px"><div class="tt">志高电水壶不锈钢电热水壶<br>家用烧水壶全自动开水壶煮<br>水壶</div></div>
<div class="img6 im" style="left:530px;top:14px"><svg width="60" height="60" viewBox="0 0 60 60"><rect width="60" height="60" fill="url(#g6)"/>
<rect x="5" y="0" width="2.5" height="60" fill="#071826"/>
<rect x="18" y="4.5" width="26" height="0.7" fill="#8aa0b0"/>
<rect x="10" y="8.5" width="40" height="1.6" fill="#d8e2ea"/>
<rect x="29" y="14" width="3" height="0.8" fill="#c04040"/>
<rect x="17" y="18" width="28" height="0.8" fill="#9ab0c0"/>
<path d="M17 26H44V45H17Z" fill="#2b8a6c"/><rect x="17" y="26" width="27" height="2" fill="#3aa080"/>
<path d="M44 30Q50 30 49 37Q48 41 44 41" stroke="#2b8a6c" stroke-width="2" fill="none"/>
<path d="M42 28Q52 26 60 32V40Q50 42 44 36Z" fill="#caa08c"/>
<path d="M16 60Q30 44 60 39V60Z" fill="#a4601e"/>
<path d="M36 44Q48 40 60 43V52Q48 48 38 50Z" fill="#d8b098" opacity="0.8"/></svg></div>
<div class="c" style="left:660px;top:0;height:89px;padding-top:2px">79.00</div>
<div class="c" style="left:861px;top:0;height:89px;padding-top:2px">69.00</div>
<div class="c" style="left:1062px;top:0;height:89px;padding-top:2px">10.00</div>
<svg class="abs" style="left:1516px;top:38px" width="11" height="12" viewBox="0 0 11 12"><path d="M1.3 10.8L1.9 7.6L6.9 1.4L9.1 3.2L4.1 9.4Z M1.3 10.8L4.1 9.4 M5.6 3L7.8 4.8 M5.5 11.1H10.4" fill="none" stroke="#409eff" stroke-width="0.9"/></svg>
<span class="op" style="left:1533px;top:36px">修改</span>
<svg class="abs" style="left:1573px;top:38px" width="11" height="13" viewBox="0 0 11 13"><path d="M0.6 2.4H10.4 M3.8 2.4V0.6H7.2V2.4 M1.8 2.4V10.6H9.2V2.4 M4.4 4.6V8.6 M6.6 4.6V8.6" fill="none" stroke="#409eff" stroke-width="1"/></svg>
<span class="op" style="left:1590px;top:36px">删除</span>
</div>
<div class="row" style="top:772px;height:81px">
<i class="cb" style="left:21px;top:34px"></i>
<div class="c" style="left:56px;top:0;height:80px;padding-top:2px">29</div>
<div class="c" style="left:258px;top:0;height:80px;padding-top:2px"><div class="tt">万利达电热水壶加厚304不锈<br>钢烧水壶保温壶礼品活动</div></div>
<div class="img7 im" style="left:530px;top:10px"><svg width="60" height="60" viewBox="0 0 60 60"><rect width="60" height="60" fill="#efeded"/>
<rect x="0" y="0" width="22" height="48" fill="#f7f4f4"/>
<rect x="12" y="5" width="5" height="11" fill="#e06aa0"/>
<rect x="5" y="9" width="4" height="33" fill="#e07aa8" opacity="0.85"/>
<path d="M0 34Q8 26 14 36Q18 44 12 52L0 52Z" fill="#5d8a6a"/>
<rect x="0" y="50" width="60" height="10" fill="#cfc0b0"/>
<ellipse cx="11" cy="52" rx="9" ry="3" fill="#fafafa"/><rect x="6" y="45" width="10" height="6" fill="#f8f8f8"/><rect x="7" y="45" width="8" height="1.5" fill="#4a3020"/>
<path d="M24 14Q24 10 30 10H47Q52 10 52 15V54H24Z" fill="#ecc0c8"/>
<path d="M49 14Q58 14 58 30Q58 42 51 44" stroke="#c8c0c4" stroke-width="3" fill="none"/>
<path d="M24 13L20 18L24 19" stroke="#999" stroke-width="1.2" fill="none"/>
<rect x="32" y="29" width="10" height="13" fill="#8a3a92"/>
<rect x="34" y="52" width="5" height="2" fill="#d02030"/>
<rect x="22" y="54" width="32" height="2" fill="#f4e4e8"/></svg></div>
<div class="c" style="left:660px;top:0;height:80px;padding-top:2px">59.00</div>
<div class="c" style="left:861px;top:0;height:80px;padding-top:2px">59.00</div>
<div class="c" style="left:1062px;top:0;height:80px;padding-top:2px">10.00</div>
<svg class="abs" style="left:1516px;top:34px" width="11" height="12" viewBox="0 0 11 12"><path d="M1.3 10.8L1.9 7.6L6.9 1.4L9.1 3.2L4.1 9.4Z M1.3 10.8L4.1 9.4 M5.6 3L7.8 4.8 M5.5 11.1H10.4" fill="none" stroke="#409eff" stroke-width="0.9"/></svg>
<span class="op" style="left:1533px;top:32px">修改</span>
<svg class="abs" style="left:1573px;top:34px" width="11" height="13" viewBox="0 0 11 13"><path d="M0.6 2.4H10.4 M3.8 2.4V0.6H7.2V2.4 M1.8 2.4V10.6H9.2V2.4 M4.4 4.6V8.6 M6.6 4.6V8.6" fill="none" stroke="#409eff" stroke-width="1"/></svg>
<span class="op" style="left:1590px;top:32px">删除</span>
</div>
<div class="row" style="top:853px;height:90px">
<i class="cb" style="left:21px;top:38px"></i>
<div class="c" style="left:56px;top:0;height:89px;padding-top:2px">28</div>
<div class="c" style="left:258px;top:0;height:89px;padding-top:2px"><div class="tt">三只小熊智能恒温电热水壶<br>家用烧水壶保温壶智能水壶<br>礼品</div></div>
<div class="img8 im" style="left:530px;top:14px"><svg width="60" height="60" viewBox="0 0 60 60"><rect width="60" height="60" fill="#d0d0d0"/></svg></div>
<div class="c" style="left:660px;top:0;height:89px;padding-top:2px">59.00</div>
<div class="c" style="left:861px;top:0;height:89px;padding-top:2px">59.00</div>
<div class="c" style="left:1062px;top:0;height:89px;padding-top:2px">10.00</div>
<svg class="abs" style="left:1516px;top:38px" width="11" height="12" viewBox="0 0 11 12"><path d="M1.3 10.8L1.9 7.6L6.9 1.4L9.1 3.2L4.1 9.4Z M1.3 10.8L4.1 9.4 M5.6 3L7.8 4.8 M5.5 11.1H10.4" fill="none" stroke="#409eff" stroke-width="0.9"/></svg>
<span class="op" style="left:1533px;top:36px">修改</span>
<svg class="abs" style="left:1573px;top:38px" width="11" height="13" viewBox="0 0 11 13"><path d="M0.6 2.4H10.4 M3.8 2.4V0.6H7.2V2.4 M1.8 2.4V10.6H9.2V2.4 M4.4 4.6V8.6 M6.6 4.6V8.6" fill="none" stroke="#409eff" stroke-width="1"/></svg>
<span class="op" style="left:1590px;top:36px">删除</span>
</div>
<i class="px" style="left:1572px;top:276px;background:#e2e2e2"></i>
<i class="px" style="left:1584px;top:276px;background:#e6e6e6"></i>
<i class="px" style="left:1572px;top:282px;background:#dcdcdc"></i>
<i class="px" style="left:1578px;top:282px;background:#eeeeee"></i>
<i class="px" style="left:1584px;top:282px;background:#c8c8c8"></i>
<i class="px" style="left:1590px;top:282px;background:#c2c2c2"></i>
<i class="px" style="left:1572px;top:288px;background:#b2b2b2"></i>
<i class="px" style="left:1578px;top:288px;background:#e8e8e8"></i>
<i class="px" style="left:1590px;top:288px;background:#ababab"></i>
<i class="px" style="left:1590px;top:366px;background:#dcdcdc"></i>
<i class="px" style="left:1578px;top:372px;background:#cccccc"></i>
<i class="px" style="left:1584px;top:372px;background:#d8d8d8"></i>
<i class="px" style="left:1590px;top:372px;background:#e6e6e6"></i>
<i class="px" style="left:1572px;top:378px;background:#adadad"></i>
<i class="px" style="left:1578px;top:378px;background:#f4f4f4"></i>
<i class="px" style="left:1584px;top:378px;background:#eaeaea"></i>
<i class="px" style="left:1578px;top:456px;background:#acacac"></i>
<i class="px" style="left:1584px;top:456px;background:#acacac"></i>
<i class="px" style="left:1590px;top:456px;background:#f2f2f4"></i>
<i class="px" style="left:1578px;top:462px;background:#eeeeee"></i>
<i class="px" style="left:1584px;top:462px;background:#b2b2b2"></i>
<i class="px" style="left:1578px;top:540px;background:#bbbbbb"></i>
<i class="px" style="left:1572px;top:546px;background:#b0b0b0"></i>
<i class="px" style="left:1578px;top:546px;background:#dddddd"></i>
<i class="px" style="left:1584px;top:546px;background:#b8b8b8"></i>
<i class="px" style="left:1572px;top:630px;background:#fafafa"></i>
<i class="px" style="left:1578px;top:630px;background:#b2b2b2"></i>
<i class="px" style="left:1584px;top:630px;background:#d2d2d2"></i>
<i class="px" style="left:1578px;top:636px;background:#f6f6f6"></i>
<i class="px" style="left:1584px;top:636px;background:#b8b8b8"></i>
<i class="px" style="left:1590px;top:636px;background:#fafafa"></i>
<i class="px" style="left:1578px;top:720px;background:#b8b8b8"></i>
<i class="px" style="left:1584px;top:720px;background:#e4e4e4"></i>
<i class="px" style="left:1572px;top:726px;background:#f4f4f4"></i>
<i class="px" style="left:1578px;top:726px;background:#f7f7f7"></i>
<i class="px" style="left:1584px;top:726px;background:#f4f4f4"></i>
<i class="px" style="left:1578px;top:804px;background:#c8c8c8"></i>
<i class="px" style="left:1584px;top:804px;background:#fafafa"></i>
<i class="px" style="left:1578px;top:810px;background:#fafafa"></i>
<i class="px" style="left:1584px;top:810px;background:#b8b8b8"></i>
<i class="lb" style="left:1545px;top:330px;width:93px;height:1px;background:#fff"></i>
<i class="lb" style="left:1545px;top:330px;width:21px;height:6px"></i>
<i class="lb" style="left:1578px;top:330px;width:6px;height:6px"></i>
<i class="lb" style="left:1590px;top:324px;width:12px;height:6px"></i>
<i class="lb" style="left:1602px;top:330px;width:6px;height:6px"></i>
<i class="lb" style="left:1620px;top:324px;width:6px;height:6px"></i>
<i class="lb" style="left:1620px;top:330px;width:6px;height:6px"></i>
<i class="lb" style="left:1626px;top:330px;width:6px;height:6px"></i>
<i class="lb" style="left:1545px;top:420px;width:93px;height:1px;background:#fff"></i>
<i class="lb" style="left:1548px;top:420px;width:12px;height:6px"></i>
<i class="lb" style="left:1572px;top:420px;width:6px;height:6px"></i>
<i class="lb" style="left:1590px;top:420px;width:6px;height:6px"></i>
<i class="lb" style="left:1614px;top:420px;width:18px;height:6px"></i>
<i class="lb" style="left:1545px;top:501px;width:93px;height:1px;background:#fff"></i>
<i class="lb" style="left:1548px;top:498px;width:6px;height:6px"></i>
<i class="lb" style="left:1560px;top:498px;width:6px;height:6px"></i>
<i class="lb" style="left:1572px;top:498px;width:24px;height:6px"></i>
<i class="lb" style="left:1602px;top:498px;width:36px;height:6px"></i>
<i class="lb" style="left:1545px;top:591px;width:93px;height:1px;background:#fff"></i>
<i class="lb" style="left:1545px;top:588px;width:27px;height:6px"></i>
<i class="lb" style="left:1584px;top:588px;width:6px;height:6px"></i>
<i class="lb" style="left:1602px;top:588px;width:12px;height:6px"></i>
<i class="lb" style="left:1620px;top:588px;width:18px;height:6px"></i>
<i class="lb" style="left:1545px;top:681px;width:93px;height:1px;background:#fff"></i>
<i class="lb" style="left:1548px;top:678px;width:6px;height:6px"></i>
<i class="lb" style="left:1560px;top:678px;width:12px;height:6px"></i>
<i class="lb" style="left:1584px;top:678px;width:6px;height:6px"></i>
<i class="lb" style="left:1608px;top:678px;width:6px;height:6px"></i>
<i class="lb" style="left:1620px;top:678px;width:6px;height:6px"></i>
<i class="lb" style="left:1545px;top:771px;width:93px;height:1px;background:#fff"></i>
<i class="lb" style="left:1548px;top:768px;width:18px;height:6px"></i>
<i class="lb" style="left:1572px;top:768px;width:12px;height:6px"></i>
<i class="lb" style="left:1596px;top:768px;width:42px;height:6px"></i>
<!--/ROWS-->
<div id="shadow" style="position:absolute;left:520px;top:880px;width:860px;height:40px;border-radius:8px;box-shadow:0 0 40px 10px rgba(0,0,0,.11)"></div>
<div id="scroll"></div><div id="thumb"></div>
</body></html>
